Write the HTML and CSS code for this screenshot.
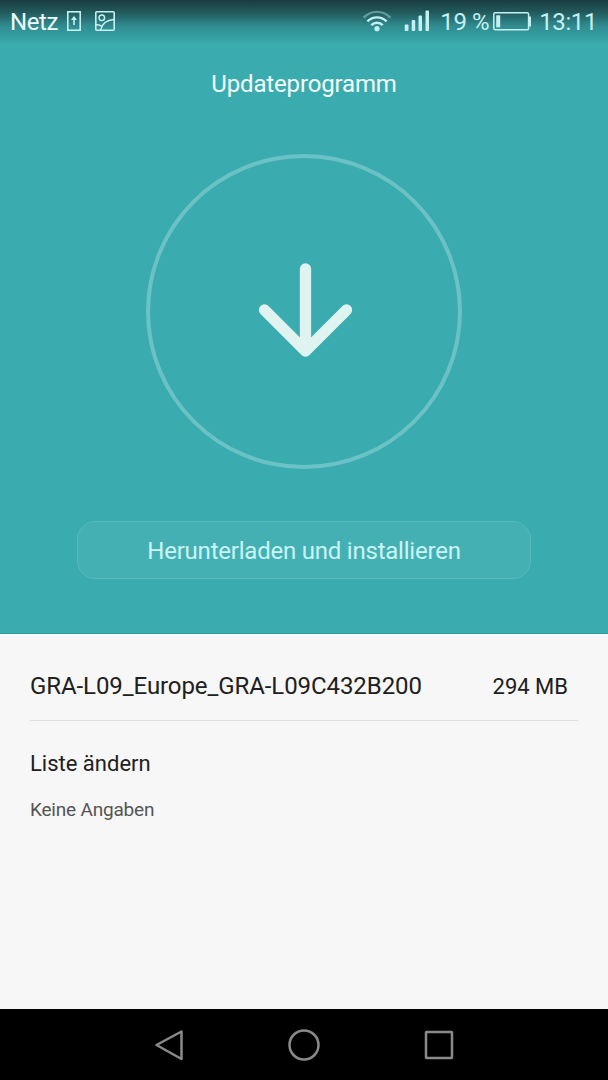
FILE: index.html
```html
<!DOCTYPE html>
<html lang="de">
<head>
    <meta charset="UTF-8">
    <meta name="viewport" content="width=device-width, initial-scale=1.0">
    <title>Updateprogramm</title>
    <link rel="stylesheet" href="styles.css">
</head>
<body>
    <section class="update">
        <header class="status-bar">
            <span class="carrier">Netz</span>
            <svg class="icon-sim" width="14" height="20" viewBox="0 0 14 20">
                <rect x="0.8" y="0.8" width="12.4" height="18.4" fill="none" stroke="currentColor" stroke-width="1.6"/>
                <path d="M7 7v7" fill="none" stroke="currentColor" stroke-width="1.6"/>
                <path d="M7 5l3 4H4z" fill="currentColor"/>
            </svg>
            <svg class="icon-picture" width="20" height="20" viewBox="0 0 20 20">
                <rect x="0.8" y="0.8" width="18.4" height="18.4" rx="1" fill="none" stroke="currentColor" stroke-width="1.6"/>
                <circle cx="6.8" cy="6.8" r="2.8" fill="none" stroke="currentColor" stroke-width="1.4"/>
                <path d="M5.5 19C7 13 12 9 19 8.5M1 14C3 13.5 5 14 7.3 15.5" fill="none" stroke="currentColor" stroke-width="1.4"/>
            </svg>

            <svg class="icon-wifi" width="30" height="22" viewBox="0 0 30 22">
                <g fill="none" stroke="currentColor" stroke-width="2.4">
                    <path d="M1.7 7.6C9 0 21 0 28.3 7.6" opacity="0.4"/>
                    <path d="M5.4 11.3C11 6 19 6 24.6 11.3"/>
                    <path d="M9.3 15.2C12.5 12 17.5 12 20.7 15.2"/>
                </g>
                <circle cx="15" cy="18.7" r="2.6" fill="currentColor"/>
            </svg>
            <svg class="icon-signal" width="26" height="22" viewBox="0 0 26 22" fill="currentColor">
                <rect x="0.7" y="14.5" width="3.8" height="6.5" rx="1"/>
                <rect x="7.7" y="10" width="3.5" height="11" rx="1"/>
                <rect x="14.5" y="5.5" width="3.5" height="15.5" rx="1"/>
                <rect x="21.5" y="0.5" width="3.5" height="20.5" rx="1"/>
            </svg>
            <span class="percent">19 %</span>
            <svg class="icon-battery" width="38" height="19" viewBox="0 0 38 19">
                <rect x="0.8" y="0.8" width="34.8" height="17" rx="1.5" fill="none" stroke="currentColor" stroke-width="1.5"/>
                <rect x="3.2" y="3.3" width="4" height="12" fill="currentColor"/>
                <path d="M36 4.5h2v10h-2z" fill="currentColor"/>
            </svg>
            <span class="clock">13:11</span>
        </header>

        <h1>Updateprogramm</h1>

        <div class="circle">
            <svg width="100" height="96" viewBox="0 0 100 96">
                <path d="M51.5 7V88.5M10.5 48L51.5 89L92.5 48" fill="none" stroke="currentColor" stroke-width="11.3" stroke-linecap="round" stroke-linejoin="round"/>
            </svg>
        </div>

        <button class="download" type="button">Herunterladen und installieren</button>
    </section>

    <main class="details">
        <div class="version">
            <span class="version-name">GRA-L09_Europe_GRA-L09C432B200</span>
            <span class="version-size">294 MB</span>
        </div>
        <h2>Liste ändern</h2>
        <p>Keine Angaben</p>
    </main>

    <nav class="nav-bar">
        <svg width="32" height="32" viewBox="0 0 32 32">
            <path d="M28.5 2.5L3.5 16L28.5 30Z"/>
        </svg>
        <svg width="32" height="32" viewBox="0 0 32 32">
            <circle cx="16" cy="16" r="14.5"/>
        </svg>
        <svg width="32" height="32" viewBox="0 0 32 32">
            <rect x="3" y="3" width="26" height="26" rx="0.5"/>
        </svg>
    </nav>
</body>
</html>
```
FILE: styles.css
```css
* {
    box-sizing: border-box;
}

body {
    display: flex;
    flex-direction: column;
    height: 1080px;
    margin: 0;
    font-family: Roboto, "Liberation Sans", sans-serif;
    background-color: #f7f7f7;
}

.update {
    display: flex;
    flex-direction: column;
    align-items: center;
    height: 634px;
    color: #fff;
    background: linear-gradient(#193c3f 0, #22595c 12px, #308c90 26px, #3aabaf 44px);
    border-bottom: 1px solid #35989c;
}

.status-bar {
    display: flex;
    align-items: center;
    width: 100%;
    height: 44px;
    padding: 0 11px 2px 10px;
    color: #c5f0f1;
    font-size: 24px;
    white-space: nowrap;
}

.status-bar span {
    padding-top: 2px;
    letter-spacing: -0.4px;
}

.carrier {
    color: #eefcfc;
}

.icon-sim {
    margin-left: 9px;
}

.icon-picture {
    margin-left: 14px;
}

.icon-wifi {
    margin-left: auto;
}

.icon-signal {
    margin-left: 12px;
}

.percent {
    margin-left: 10px;
}

.icon-battery {
    margin-left: 4px;
}

.clock {
    margin-left: 8px;
}

h1 {
    margin: 26px 0 0;
    font-size: 24px;
    line-height: 28px;
    font-weight: 400;
    letter-spacing: -0.15px;
    color: #f3fdfd;
}

.circle {
    display: flex;
    align-items: center;
    justify-content: center;
    width: 316px;
    height: 315px;
    margin-top: 56px;
    padding-bottom: 4px;
    border: 4px solid #6bc2c6;
    border-radius: 50%;
    color: #dff3f1;
}

.download {
    width: 454px;
    height: 58px;
    margin-top: 52px;
    padding: 2px 0 0;
    border: 1px solid #57babd;
    border-radius: 18px;
    background-color: #45b0b4;
    color: #c9f5f5;
    font-family: inherit;
    font-size: 24px;
    letter-spacing: -0.22px;
}

.details {
    flex: 1;
    padding: 0 30px;
    color: #202020;
}

.version {
    display: flex;
    align-items: center;
    justify-content: space-between;
    height: 87px;
    padding: 18px 10px 0 0;
    border-bottom: 1px solid #dedede;
}

.version-name {
    font-size: 24px;
    letter-spacing: -0.08px;
}

.version-size {
    font-size: 22px;
}

h2 {
    margin: 29px 0 0;
    font-size: 22px;
    line-height: 28px;
    font-weight: 400;
}

p {
    margin: 20px 0 0;
    font-size: 19px;
    line-height: 24px;
    letter-spacing: -0.2px;
    color: #555;
}

.nav-bar {
    display: flex;
    justify-content: center;
    align-items: center;
    gap: 103px;
    height: 71px;
    background-color: #000;
}

.nav-bar svg {
    fill: none;
    stroke: #8a8a8a;
    stroke-width: 2.5;
    stroke-linejoin: round;
}
```
